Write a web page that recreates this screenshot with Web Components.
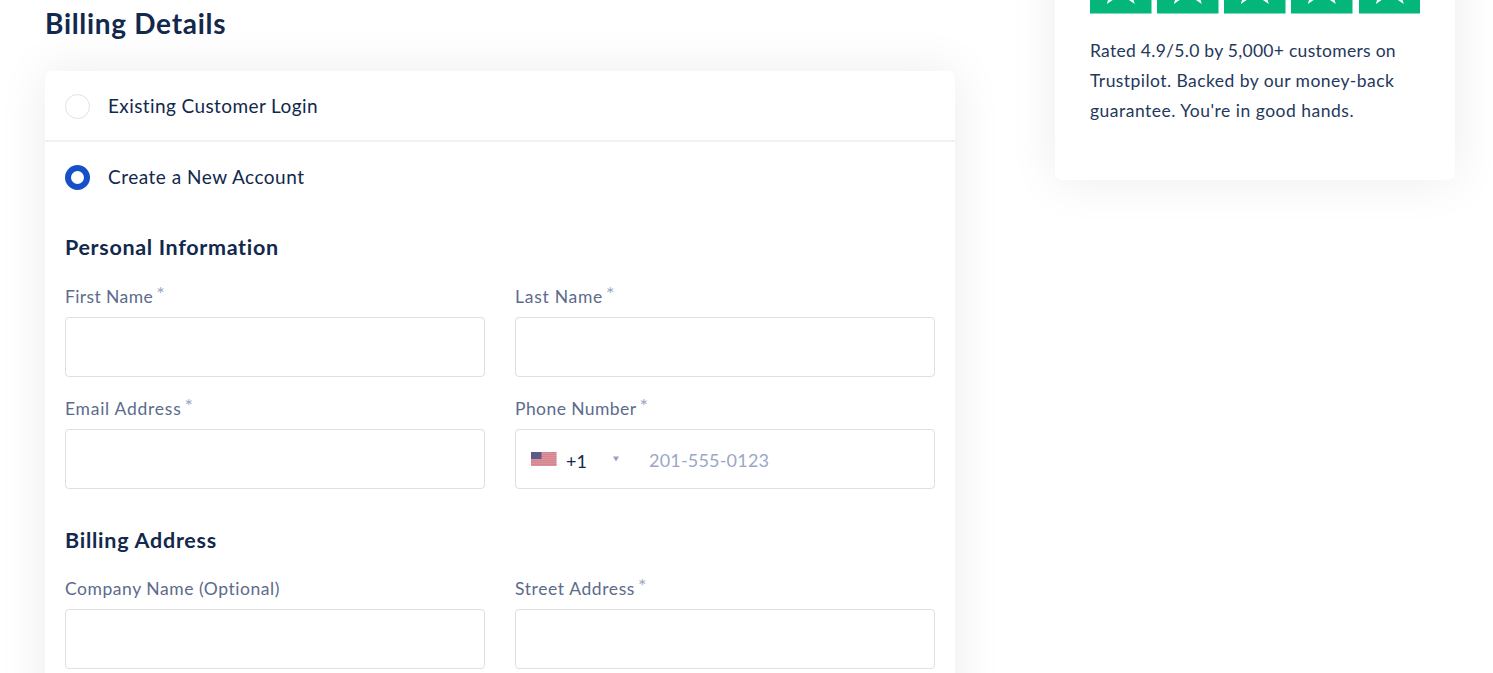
<!DOCTYPE html>
<html lang="en">
<head>
<meta charset="utf-8">
<title>Billing Details</title>
<style>
body {
  margin: 0;
  height: 673px;
  overflow: hidden;
  background: #fff;
  color: #12284c;
  font-family: Lato, "Liberation Sans", sans-serif;
}
</style>
</head>
<body>
<checkout-page></checkout-page>

<script>
// Shared helper: open shadow root with styles + markup.
function paint(el, css, html) {
  el.attachShadow({ mode: "open" }).innerHTML = `<style>${css}</style>${html}`;
}

/** shadow-card — white panel with a wide soft shadow. */
class ShadowCard extends HTMLElement {
  constructor() {
    super();
    paint(this, `
:host {
  display: block;
  box-sizing: border-box;
  background: #fff;
  border-radius: 7px;
  box-shadow: 0 0 50px rgba(0, 0, 0, .08);
}`, `<slot></slot>`);
  }
}

/** account-option — radio row. Attribute: checked */
class AccountOption extends HTMLElement {
  constructor() {
    super();
    paint(this, `
:host {
  display: flex;
  align-items: center;
  gap: 18px;
  height: 70px;
  padding: 2px 20px 0;
  box-sizing: border-box;
  font-size: 19px;
}
i {
  width: 25px;
  height: 25px;
  box-sizing: border-box;
  border: 1.5px solid #e2e2e2;
  border-radius: 50%;
}
:host([checked]) i { border: 6px solid #1650c8; }
span { margin-top: -3px; letter-spacing: var(--ls, .4px); }
`, `<i></i><span><slot></slot></span>`);
  }
}

/** form-field — label over an input box. Attributes: label, required */
class FormField extends HTMLElement {
  constructor() {
    super();
    this.attachShadow({ mode: "open" });
  }

  connectedCallback() {
    const star = this.hasAttribute("required") ? `<sup>*</sup>` : "";
    this.shadowRoot.innerHTML = `
<style>
:host { display: block; }
label {
  display: flex;
  height: 32px;
  line-height: 24px;
  font-size: 17.5px;
  color: #5c6b8c;
  letter-spacing: var(--ls, .3px);
}
sup {
  margin: -5px 0 0 3px;
  font-size: 20px;
  line-height: 26px;
  letter-spacing: 0;
  color: #9ba7c2;
}
.box {
  display: flex;
  align-items: center;
  height: 60px;
  box-sizing: border-box;
  border: 1px solid #dddfe3;
  border-radius: 4px;
}
</style>
<label>${this.getAttribute("label")}${star}</label>
<div class="box"><slot></slot></div>`;
  }
}

/** phone-input — flag, dial code and placeholder number. */
class PhoneInput extends HTMLElement {
  constructor() {
    super();
    const stripes = [0, 2, 4, 6, 8, 10, 12]
      .map((y) => `<rect y="${y}" width="25.5" height="1" fill="#d5858f"/>`).join("");
    paint(this, `
:host {
  display: flex;
  align-items: center;
  padding-left: 15px;
  font-size: 18px;
}
svg { display: block; }
.flag { margin-top: 0; }
.code { width: 46px; margin: 3px 0 0 9px; }
.caret { margin: 0 0 0 1px; }
.num { margin: 1px 0 0 30px; color: #9ba7c6; letter-spacing: .2px; }
`, `
<svg class="flag" width="26" height="14" viewBox="0 0 26 14">
  <rect width="25.5" height="14" fill="#dc929b"/>${stripes}
  <rect width="10.5" height="7" fill="#5d5c88"/>
</svg>
<span class="code">+1</span>
<svg class="caret" width="6" height="6" viewBox="0 0 6 6"><path d="M0 .5h6L3 5.5z" fill="#98a3c4"/></svg>
<span class="num">201-555-0123</span>`);
  }
}

/** star-rating — row of five green rating tiles. */
class StarRating extends HTMLElement {
  constructor() {
    super();
    const tile = `
<svg width="61.5" height="61.5" viewBox="0 0 61.5 61.5">
  <rect width="61.5" height="61.5" fill="#04b67a"/>
  <path d="M30.8 8l5.3 16.5h17.4L39.4 34.7l5.4 17.3L30.8 42.5 16.8 52l5.4-17.3L8.1 24.5h17.4z" fill="#fff"/>
</svg>`;
    paint(this, `
:host { display: flex; justify-content: space-between; }
svg { display: block; }
`, tile.repeat(5));
  }
}

/** checkout-page — form column and trust sidebar. */
class CheckoutPage extends HTMLElement {
  constructor() {
    super();
    paint(this, `
:host {
  display: grid;
  grid-template-columns: 910px 400px;
  gap: 100px;
  align-items: start;
  height: 673px;
  padding-left: 45px;
  overflow: hidden;
}
h1, h2, p { margin: 0; }
h1 {
  height: 70.5px;
  padding-top: 5px;
  box-sizing: border-box;
  font-size: 28px;
  line-height: 36px;
  letter-spacing: .7px;
}
.form { height: 700px; }
.rule { height: 1.5px; margin-top: -.5px; background: #f1f1f1; }
.fields { padding: 20px 20px 0; }
h2 { font-size: 21.5px; line-height: 30px; letter-spacing: .67px; }
.grid {
  display: grid;
  grid-template-columns: 1fr 1fr;
  gap: 20px 30px;
  padding-top: 23.5px;
}
h2.second { margin-top: 35.5px; letter-spacing: .75px; }
.second + .grid { padding-top: 22px; }
.side { height: 227.5px; margin-top: -48px; padding: 0 35px; }
.side p {
  margin-top: 22px;
  font-size: 17.5px;
  line-height: 30px;
  color: #24385c;
}
.side span { display: block; white-space: nowrap; letter-spacing: var(--ls); }
`, `
<main>
  <h1>Billing Details</h1>
  <shadow-card class="form">
    <account-option>Existing Customer Login</account-option>
    <div class="rule"></div>
    <account-option checked style="--ls:.5px">Create a New Account</account-option>
    <div class="fields">
      <h2>Personal Information</h2>
      <div class="grid">
        <form-field label="First Name" required style="--ls:.4px"></form-field>
        <form-field label="Last Name" required style="--ls:.74px"></form-field>
        <form-field label="Email Address" required style="--ls:.74px"></form-field>
        <form-field label="Phone Number" required style="--ls:.43px"><phone-input></phone-input></form-field>
      </div>
      <h2 class="second">Billing Address</h2>
      <div class="grid">
        <form-field label="Company Name (Optional)" style="--ls:.55px"></form-field>
        <form-field label="Street Address" required style="--ls:.6px"></form-field>
      </div>
    </div>
  </shadow-card>
</main>
<shadow-card class="side">
  <star-rating></star-rating>
  <p>
    <span style="--ls:.28px">Rated 4.9/5.0 by 5,000+ customers on</span>
    <span style="--ls:.44px">Trustpilot. Backed by our money-back</span>
    <span style="--ls:.5px">guarantee. You're in good hands.</span>
  </p>
</shadow-card>`);
  }
}

customElements.define("shadow-card", ShadowCard);
customElements.define("account-option", AccountOption);
customElements.define("form-field", FormField);
customElements.define("phone-input", PhoneInput);
customElements.define("star-rating", StarRating);
customElements.define("checkout-page", CheckoutPage);
</script>
</body>
</html>
